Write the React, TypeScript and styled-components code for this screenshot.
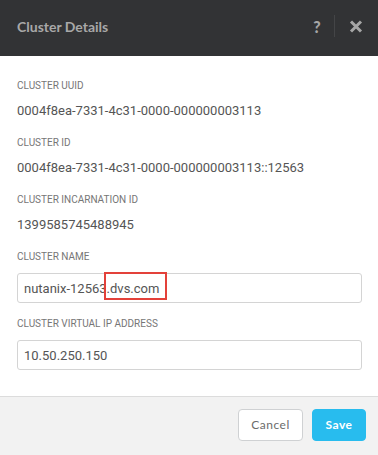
import React from "react";
import styled, { createGlobalStyle } from "styled-components";

const GlobalStyle = createGlobalStyle`
  html, body {
    margin: 0;
    padding: 0;
    background: #ffffff;
  }
  body {
    font-family: Roboto, "Liberation Sans", sans-serif;
  }
`;

const fields = [
  { label: "Cluster UUID", value: "0004f8ea-7331-4c31-0000-000000003113" },
  { label: "Cluster ID", value: "0004f8ea-7331-4c31-0000-000000003113::12563" },
  { label: "Cluster Incarnation ID", value: "1399585745488945" },
];

const App = () => {
  return (
    <>
      <GlobalStyle />
      <Dialog>
        <Header>
          <Title>Cluster Details</Title>
          <HeaderActions>
            <HelpButton>?</HelpButton>
            <Divider />
            <CloseButton aria-label="close">
              <svg width="14" height="13" viewBox="0 0 14 13">
                <path
                  d="M2 1.5 L12 11.5 M12 1.5 L2 11.5"
                  stroke="#a6a6a6"
                  strokeWidth="3"
                />
              </svg>
            </CloseButton>
          </HeaderActions>
        </Header>

        <Body>
          {fields.map((f) => (
            <Field key={f.label}>
              <Label>{f.label}</Label>
              <Value>{f.value}</Value>
            </Field>
          ))}

          <Field $input>
            <Label>Cluster Name</Label>
            <InputWrap>
              <TextInput defaultValue="nutanix-12563.dvs.com" />
              <Highlight />
            </InputWrap>
          </Field>

          <Field $input>
            <Label>Cluster Virtual IP Address</Label>
            <InputWrap>
              <TextInput defaultValue="10.50.250.150" />
            </InputWrap>
          </Field>
        </Body>

        <Footer>
          <Button>Cancel</Button>
          <Button $primary>Save</Button>
        </Footer>
      </Dialog>
    </>
  );
};

export default App;

const Dialog = styled.div`
  width: 378px;
  height: 455px;
  display: flex;
  flex-direction: column;
  background: #ffffff;
`;

const Header = styled.div`
  height: 56px;
  flex-shrink: 0;
  background: #323335;
  display: flex;
  align-items: center;
  justify-content: space-between;
  padding: 0 15px 0 17px;
  box-sizing: border-box;
`;

const Title = styled.div`
  font-family: Lato, "Liberation Sans", sans-serif;
  color: #a8a8a8;
  font-size: 14px;
  font-weight: 700;
  margin-top: -4px;
`;

const HeaderActions = styled.div`
  display: flex;
  align-items: center;
  margin-top: -4px;
`;

const HelpButton = styled.span`
  font-family: Lato, "Liberation Sans", sans-serif;
  color: #a6a6a6;
  font-size: 16px;
  font-weight: 900;
  width: 12px;
  text-align: center;
`;

const Divider = styled.div`
  width: 1px;
  height: 22px;
  background: #444547;
  margin: 0 14px 0 11px;
`;

const CloseButton = styled.span`
  display: flex;
  align-items: center;
`;

const Body = styled.div`
  flex: 1;
  padding: 24px 16px 0 17px;
  display: flex;
  flex-direction: column;
  gap: 15px;
`;

const Field = styled.div<{ $input?: boolean }>`
  display: flex;
  flex-direction: column;
  gap: ${({ $input }) => ($input ? "10px" : "8px")};
`;

const Label = styled.div`
  font-size: 10px;
  line-height: 12px;
  color: #767676;
  text-transform: uppercase;
`;

const Value = styled.div`
  font-size: 13px;
  line-height: 22px;
  color: #555555;
`;

const InputWrap = styled.div`
  position: relative;
`;

const TextInput = styled.input`
  width: 100%;
  box-sizing: border-box;
  height: 30px;
  border: 1px solid #d4d4d4;
  border-radius: 3px;
  padding: 0 6px;
  font-family: Roboto, "Liberation Sans", sans-serif;
  font-size: 13px;
  color: #555555;
  background: #ffffff;
  outline: none;
`;

const Highlight = styled.div`
  position: absolute;
  left: 87px;
  top: -1px;
  width: 63px;
  height: 28px;
  border: 2px solid #e3413a;
  box-sizing: border-box;
  pointer-events: none;
`;

const Footer = styled.div`
  height: 59px;
  flex-shrink: 0;
  background: #f2f2f2;
  border-top: 1px solid #dcdcdc;
  box-sizing: border-box;
  display: flex;
  align-items: center;
  justify-content: flex-end;
  gap: 9px;
  padding: 0 12px 3px 0;
`;

const Button = styled.button<{ $primary?: boolean }>`
  height: 32px;
  padding: 0 12px;
  min-width: ${({ $primary }) => ($primary ? "54px" : "65px")};
  border-radius: 4px;
  border: 1px solid ${({ $primary }) => ($primary ? "#28bcee" : "#cfd1d3")};
  background: ${({ $primary }) => ($primary ? "#28bcee" : "#ffffff")};
  color: ${({ $primary }) => ($primary ? "#ffffff" : "#6b6b6b")};
  font-family: Lato, "Liberation Sans", sans-serif;
  font-size: 12px;
  font-weight: ${({ $primary }) => ($primary ? 700 : 400)};
  letter-spacing: 0.5px;
  cursor: pointer;
`;
